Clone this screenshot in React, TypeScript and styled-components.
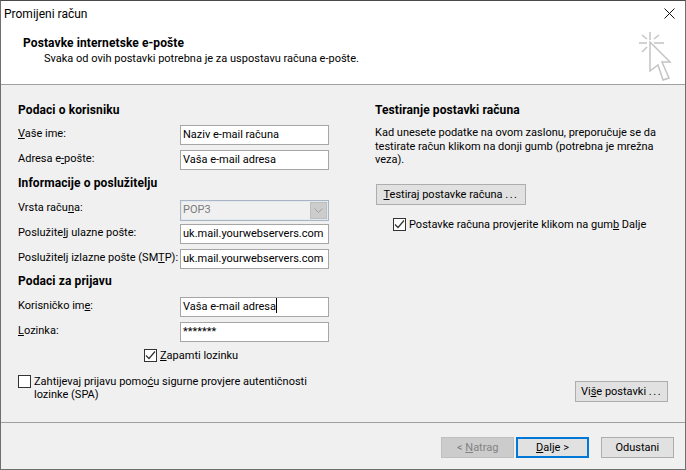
import React from 'react';
import styled, { createGlobalStyle } from 'styled-components';

const GlobalStyle = createGlobalStyle`
  html, body {
    margin: 0;
    padding: 0;
    background: #fff;
  }
  body {
    font-family: Roboto, "Noto Sans", sans-serif;
    font-size: 11px;
    color: #000;
  }
`;

const Dialog = styled.div`
  width: 686px;
  height: 470px;
  box-sizing: border-box;
  border: 1px solid #6f6f6f;
  border-top-color: #4a4a4a;
  display: flex;
  flex-direction: column;
  background: #f0f0f0;
  overflow: hidden;
`;

const TitleBar = styled.div`
  height: 25px;
  flex: none;
  background: #fff;
  display: flex;
  align-items: center;
  justify-content: space-between;
  padding: 0 10px 0 3px;
  font-size: 12px;
`;

const Header = styled.div`
  height: 59px;
  flex: none;
  box-sizing: border-box;
  background: #fff;
  border-bottom: 1px solid #a0a0a0;
  display: flex;
  justify-content: space-between;
  padding: 9px 13px 0 22px;
`;

const HeaderTitle = styled.div`
  font-size: 12px;
  font-weight: 700;
  line-height: 16px;
  letter-spacing: 0.1px;
`;

const HeaderText = styled.div`
  line-height: 15px;
  margin-left: 21px;
`;

const WizardSvg = styled.svg`
  margin-top: -5px;
`;

const Body = styled.div`
  flex: 1;
  display: flex;
  padding: 17px 17px 0 17px;
  position: relative;
`;

const LeftColumn = styled.div`
  width: 312px;
  flex: none;
`;

const RightColumn = styled.div`
  flex: 1;
  margin-left: 45px;
  display: flex;
  flex-direction: column;
`;

const SectionTitle = styled.div<{ $top?: number }>`
  font-size: 12px;
  font-weight: 700;
  height: 16px;
  line-height: 16px;
  letter-spacing: 0.1px;
  margin-top: ${p => p.$top ?? 0}px;
`;

const FormRows = styled.div<{ $top: number }>`
  display: grid;
  grid-template-columns: 162px 149px;
  grid-auto-rows: 20px;
  row-gap: 5px;
  margin-top: ${p => p.$top}px;
`;

const Label = styled.label`
  line-height: 18px;
  white-space: nowrap;
`;

const Field = styled.div`
  box-sizing: border-box;
  height: 20px;
  border: 1px solid #a6a6a6;
  background: #fff;
  padding-left: 2px;
  line-height: 18px;
  white-space: nowrap;
  overflow: hidden;
`;

const Combo = styled.div`
  box-sizing: border-box;
  height: 21px;
  margin-top: 1px;
  border: 1px solid #a9b5c2;
  box-shadow: inset 0 0 0 1px #e3e9f0;
  background: #f0f0f0;
  color: #7a7a7a;
  padding-left: 2px;
  line-height: 18px;
  display: flex;
  justify-content: space-between;
`;

const ComboArrow = styled.div`
  box-sizing: border-box;
  width: 17px;
  height: 17px;
  margin: 1px;
  background: #ccc;
  border: 1px solid #bfbfbf;
  display: flex;
  align-items: center;
  justify-content: center;
`;

const Caret = styled.span`
  display: inline-block;
  width: 1px;
  height: 15px;
  background: #000;
  vertical-align: -3px;
`;

const Key = styled.u`
  text-underline-offset: 1px;
  text-decoration-thickness: 1px;
`;

const Dots = styled.span`
  letter-spacing: 1.5px;
`;

const CheckRow = styled.div<{ $top: number; $left: number; $start?: boolean }>`
  display: flex;
  align-items: ${p => (p.$start ? 'flex-start' : 'center')};
  gap: 3px;
  margin-top: ${p => p.$top}px;
  margin-left: ${p => p.$left}px;
  line-height: 13.5px;
  white-space: nowrap;
`;

const Box = styled.span`
  box-sizing: border-box;
  width: 13px;
  height: 13px;
  flex: none;
  border: 1px solid #333;
  background: #fff;
  display: flex;
  align-items: center;
  justify-content: center;
`;

const Paragraph = styled.p`
  margin: 8px 0 0;
  line-height: 13.5px;
  width: 285px;
`;

const Button = styled.button<{ $width: number; $primary?: boolean }>`
  box-sizing: border-box;
  width: ${p => p.$width}px;
  height: 21px;
  padding: 0;
  font: inherit;
  line-height: 17px;
  color: #000;
  background: #e1e1e1;
  border: ${p => (p.$primary ? '2px solid #0078d7' : '1px solid #adadad')};
  border-radius: 0;
  white-space: nowrap;

  &:disabled {
    background: #ccc;
    border-color: #bfbfbf;
    color: #838383;
  }
`;

const TestButton = styled(Button)`
  margin: 17px 0 0 1px;
`;

const MoreButton = styled(Button)`
  position: absolute;
  left: 574px;
  top: 296px;
`;

const Footer = styled.div`
  height: 47px;
  flex: none;
  box-sizing: border-box;
  border-top: 1px solid #a0a0a0;
  display: flex;
  gap: 2px;
  padding: 14px 11px 0 440px;
`;

const CancelButton = styled(Button)`
  margin-left: 10px;
`;

const CheckMark = () => (
  <svg width="11" height="11" viewBox="0 0 11 11" fill="none">
    <path d="M1 5.5 L4 8.5 L10 1.5" stroke="#333" strokeWidth="1.2" />
  </svg>
);

const WizardIcon = () => (
  <WizardSvg width="36" height="52" viewBox="0 0 36 52" fill="none" stroke="#c4c4c4" strokeWidth="1.5">
    <path d="M14 2V10M3 13H11M18 13H28M6 5L11 9M23 5L18 9M6 22L11 17" />
    <path d="M14 12L34 32H26L33 48L27 50L22 35L14 41Z" />
  </WizardSvg>
);

export default function App() {
  return (
    <>
      <GlobalStyle />
      <Dialog>
        <TitleBar>
          <span>Promijeni račun</span>
          <svg width="11" height="11" viewBox="0 0 11 11" fill="none" stroke="#111" strokeWidth="1">
            <path d="M0.5 0.5L10.5 10.5M10.5 0.5L0.5 10.5" />
          </svg>
        </TitleBar>
        <Header>
          <div>
            <HeaderTitle>Postavke internetske e-pošte</HeaderTitle>
            <HeaderText>Svaka od ovih postavki potrebna je za uspostavu računa e-pošte.</HeaderText>
          </div>
          <WizardIcon />
        </Header>
        <Body>
          <LeftColumn>
            <SectionTitle>Podaci o korisniku</SectionTitle>
            <FormRows $top={7}>
              <Label><Key>V</Key>aše ime:</Label>
              <Field>Naziv e-mail računa</Field>
              <Label>Adresa e<Key>-</Key>pošte:</Label>
              <Field>Vaša e-mail adresa</Field>
            </FormRows>
            <SectionTitle $top={5}>Informacije o poslužitelju</SectionTitle>
            <FormRows $top={8}>
              <Label>Vrsta raču<Key>n</Key>a:</Label>
              <Combo>
                POP3
                <ComboArrow>
                  <svg width="9" height="6" viewBox="0 0 9 6" fill="none" stroke="#a0a0a0" strokeWidth="1">
                    <path d="M0.5 0.5L4.5 4.5L8.5 0.5" />
                  </svg>
                </ComboArrow>
              </Combo>
              <Label>Poslužite<Key>l</Key>j ulazne pošte:</Label>
              <Field>uk.mail.yourwebservers.com</Field>
              <Label>Poslužitelj izlazne pošte (SM<Key>T</Key>P):</Label>
              <Field>uk.mail.yourwebservers.com</Field>
            </FormRows>
            <SectionTitle $top={4}>Podaci za prijavu</SectionTitle>
            <FormRows $top={8}>
              <Label>Korisničko im<Key>e</Key>:</Label>
              <Field>Vaša e-mail adresa<Caret /></Field>
              <Label><Key>L</Key>ozinka:</Label>
              <Field>*******</Field>
            </FormRows>
            <CheckRow $top={7} $left={126}>
              <Box><CheckMark /></Box>
              <span><Key>Z</Key>apamti lozinku</span>
            </CheckRow>
            <CheckRow $top={12} $left={0} $start>
              <Box />
              <span>Zahtijevaj prijavu pomo<Key>ć</Key>u sigurne provjere autentičnosti<br />lozinke (SPA)</span>
            </CheckRow>
          </LeftColumn>
          <RightColumn>
            <SectionTitle>Testiranje postavki računa</SectionTitle>
            <Paragraph>
              Kad unesete podatke na ovom zaslonu, preporučuje se da testirate račun klikom na donji gumb (potrebna je mrežna veza).
            </Paragraph>
            <TestButton $width={150}><Key>T</Key>estiraj postavke računa <Dots>...</Dots></TestButton>
            <CheckRow $top={13} $left={18}>
              <Box><CheckMark /></Box>
              <span>Postavke računa provjerite klikom na gum<Key>b</Key> Dalje</span>
            </CheckRow>
          </RightColumn>
          <MoreButton $width={93}>Vi<Key>š</Key>e postavki <Dots>...</Dots></MoreButton>
        </Body>
        <Footer>
          <Button $width={74} disabled>&lt; <Key>N</Key>atrag</Button>
          <Button $width={73} $primary><Key>D</Key>alje &gt;</Button>
          <CancelButton $width={74}>Odustani</CancelButton>
        </Footer>
      </Dialog>
    </>
  );
}
